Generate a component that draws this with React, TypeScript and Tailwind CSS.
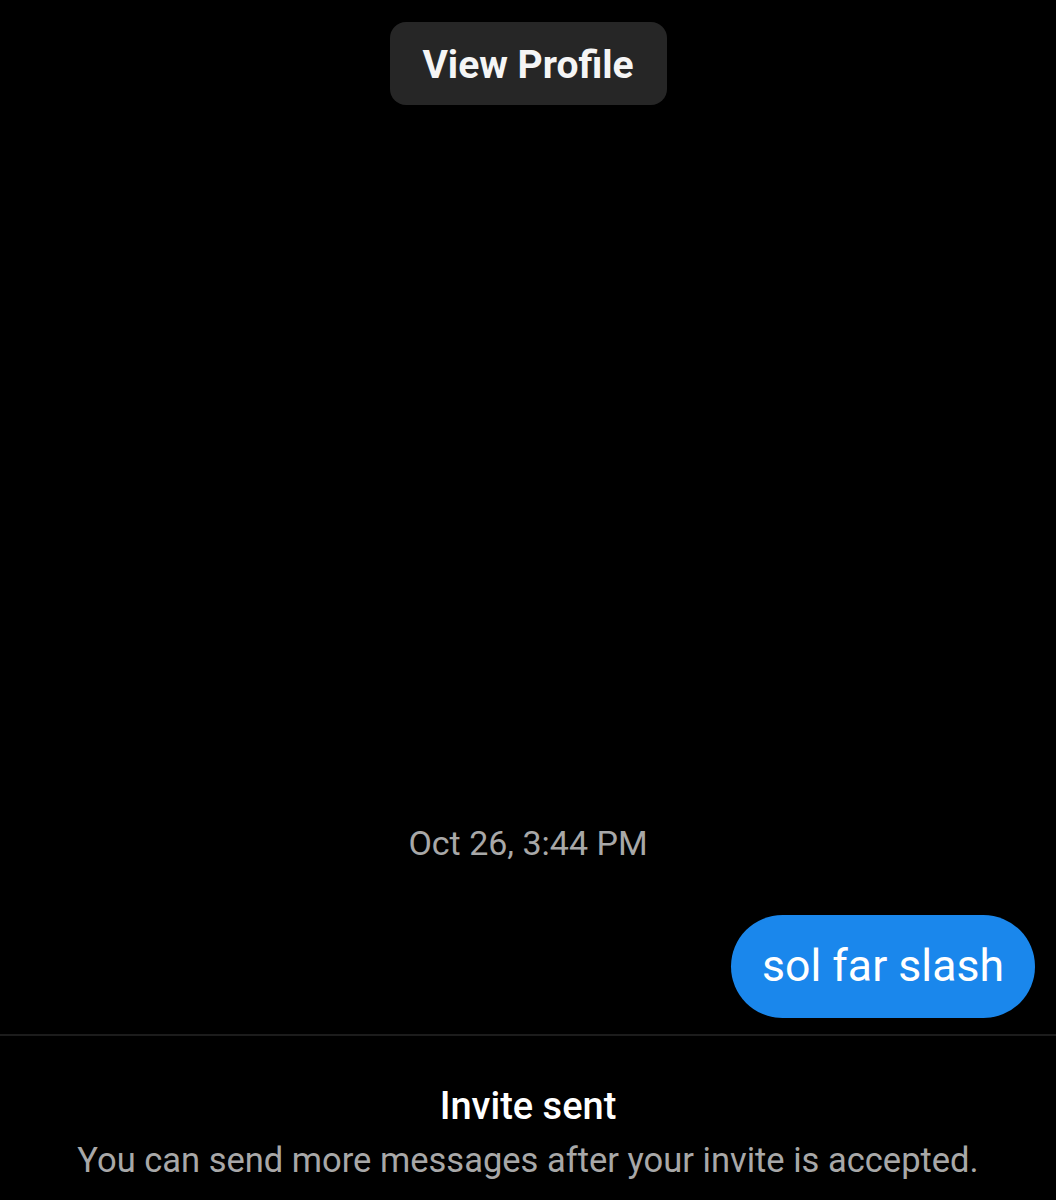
export default function App() {
  return (
    <div
      className="flex h-[1200px] w-full flex-col bg-black text-white"
      style={{ fontFamily: "Roboto, 'Noto Sans', sans-serif" }}
    >
      <div className="flex flex-1 flex-col">
        <div className="flex justify-center pt-[22px]">
          <button className="h-[83px] w-[277px] rounded-[16px] bg-[#262626] pt-[4px] text-[39px] font-bold text-[#f5f5f5]">
            View Profile
          </button>
        </div>

        <div className="mt-auto flex justify-center pb-[55px]">
          <span className="text-[34px] leading-none text-[#a8a8a8]">Oct 26, 3:44 PM</span>
        </div>

        <div className="flex justify-end pb-[16px] pr-[21px]">
          <div className="flex h-[103px] items-center rounded-full bg-[#1a87ec] px-[31px] text-[44.6px] text-white">
            sol far slash
          </div>
        </div>
      </div>

      <div className="h-[2px] bg-[#1c1c1c]" />

      <div className="flex h-[164px] flex-col items-center pt-[51px]">
        <p className="text-[38px] font-medium leading-none text-white">Invite sent</p>
        <p className="mt-[18px] text-[34.5px] leading-none text-[#a8a8a8]">
          You can send more messages after your invite is accepted.
        </p>
      </div>
    </div>
  );
}
